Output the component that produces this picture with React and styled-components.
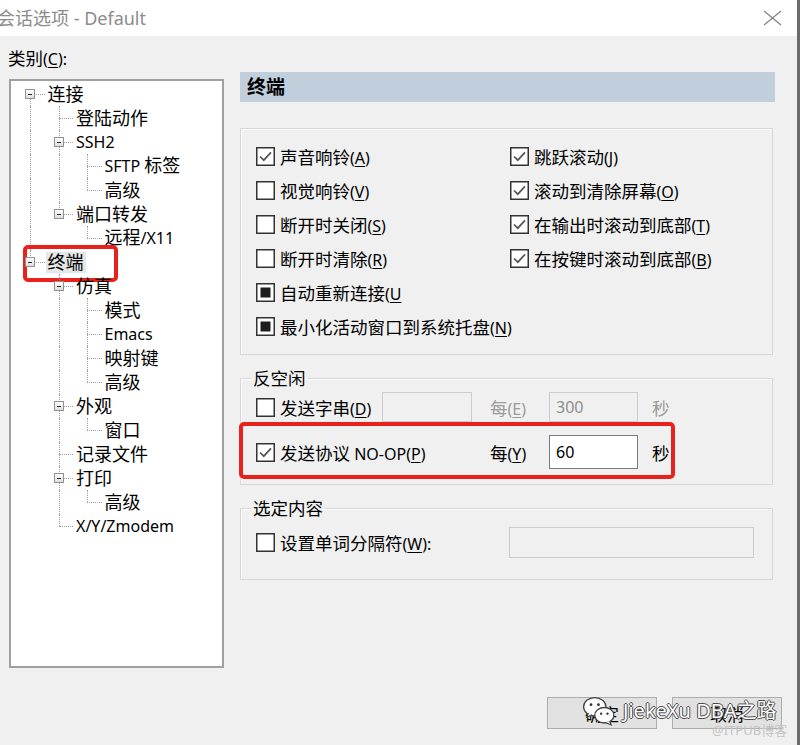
import React from "react";
import styled, { createGlobalStyle } from "styled-components";

const GlobalStyle = createGlobalStyle`
  html, body {
    margin: 0;
    padding: 0;
    background: #6b6b6b;
  }
  body {
    font-family: "Noto Sans", "Noto Sans CJK SC", sans-serif;
    color: #000;
  }
`;

const Window = styled.div`
  width: 800px;
  height: 745px;
  box-sizing: border-box;
  border-right: 3px solid #6b6b6b;
  background: #f0f0f0;
  display: flex;
  flex-direction: column;
  overflow: hidden;
`;

const TitleBar = styled.div`
  height: 36px;
  flex: none;
  background: #fff;
  display: flex;
  align-items: center;
  justify-content: space-between;
  padding-right: 15px;
`;

const TitleText = styled.span`
  margin-left: -3px;
  padding-bottom: 2px;
  font-size: 18px;
  color: #8c8c8c;
`;

const Body = styled.div`
  flex: 1;
  display: flex;
  flex-direction: column;
  padding: 8px 0 0 8px;
`;

const MainRow = styled.div`
  display: flex;
  align-items: flex-start;
`;

const LeftCol = styled.div`
  width: 216px;
  display: flex;
  flex-direction: column;
`;

const CategoryLabel = styled.div`
  font-size: 17.5px;
  line-height: 28px;
`;

const TreeBox = styled.div`
  margin: 6px 0 0 1px;
  width: 215px;
  height: 589px;
  box-sizing: border-box;
  border: 2px solid #a0a0a0;
  background: #fff;
  padding: 1px 0 0 5px;
`;

const TreeRow = styled.div`
  position: relative;
  height: 24px;
  display: flex;
  align-items: stretch;
`;

const Guide = styled.span`
  position: relative;
  flex: none;
  width: 28.5px;
  height: 100%;
  &::before {
    content: "";
    display: ${(p) => (p.$up || p.$down ? "block" : "none")};
    position: absolute;
    left: 14px;
    top: ${(p) => (p.$up ? "0" : "50%")};
    bottom: ${(p) => (p.$down ? "0" : "50%")};
    border-left: 1px dotted #a0a0a0;
  }
  &::after {
    content: "";
    display: ${(p) => (p.$branch ? "block" : "none")};
    position: absolute;
    left: 14px;
    right: 0;
    top: 50%;
    border-top: 1px dotted #a0a0a0;
  }
`;

const Expander = styled.span`
  position: absolute;
  z-index: 1;
  left: 9px;
  top: 7px;
  width: 10px;
  height: 10px;
  box-sizing: border-box;
  border: 1px solid #919191;
  background: linear-gradient(#ffffff, #dedede);
  &::after {
    content: "";
    position: absolute;
    left: 2px;
    right: 2px;
    top: 3.5px;
    height: 1px;
    background: #222;
  }
`;

const TreeLabel = styled.span`
  align-self: center;
  margin-left: 1px;
  padding: 0 2px;
  font-size: 18px;
  line-height: 21px;
  white-space: nowrap;
  background: ${(p) => (p.$selected ? "#e6e6e6" : "transparent")};
`;

const Latin = styled.span`
  font-family: "Noto Sans", sans-serif;
  font-size: 16px;
  u {
    text-underline-offset: 2px;
  }
`;

const Mark = styled.div`
  position: absolute;
  left: ${(p) => p.$left}px;
  top: ${(p) => p.$top}px;
  width: ${(p) => p.$w}px;
  height: ${(p) => p.$h}px;
  box-sizing: border-box;
  border: 4px solid #e8221b;
  border-radius: 5px;
  pointer-events: none;
`;

const RightCol = styled.div`
  margin-left: 16px;
  width: 535px;
  padding-top: 28px;
  display: flex;
  flex-direction: column;
`;

const Header = styled.div`
  height: 30px;
  background: #c1cfdc;
  padding-left: 7px;
  font-size: 19px;
  font-weight: 700;
  line-height: 30px;
`;

const Group = styled.fieldset`
  width: 533px;
  box-sizing: border-box;
  min-width: 0;
  margin: ${(p) => p.$top}px 0 0 0;
  padding: ${(p) => p.$pad};
  border: 1px solid #d7d7d7;
  box-shadow: inset 1px 1px 0 #fbfbfb;
`;

const Legend = styled.legend`
  margin-left: -5px;
  padding: 0 2px;
  font-size: 17.5px;
  line-height: 20px;
`;

const OptionGrid = styled.div`
  display: grid;
  grid-template-columns: 254px 1fr;
  grid-auto-rows: 34px;
  margin-top: -2px;
`;

const CheckItem = styled.label`
  display: flex;
  align-items: center;
  gap: 5px;
  font-size: 17.5px;
  white-space: nowrap;
  grid-column: ${(p) => (p.$wide ? "1 / -1" : "auto")};
  width: ${(p) => (p.$width ? `${p.$width}px` : "auto")};
  flex: none;
  color: ${(p) => (p.$muted ? "#9b9b9b" : "#000")};
`;

const IdleRow = styled.div`
  position: relative;
  display: flex;
  align-items: center;
  height: ${(p) => p.$h}px;
  margin-top: ${(p) => p.$gap || 0}px;
`;

const TextField = styled.div`
  flex: none;
  box-sizing: border-box;
  width: ${(p) => p.$w}px;
  height: ${(p) => p.$h}px;
  margin-left: ${(p) => (p.$auto ? "auto" : "0")};
  margin-right: ${(p) => p.$mr || 0}px;
  padding-left: 6px;
  display: flex;
  align-items: center;
  font-size: 16px;
  background: ${(p) => (p.$disabled ? "#f0f0f0" : "#fff")};
  border: 1px solid ${(p) => (p.$disabled ? "#cccccc" : "#7a7a7a")};
  color: ${(p) => (p.$disabled ? "#8f8f8f" : "#000")};
`;

const Every = styled.span`
  width: 59px;
  flex: none;
  font-size: 17.5px;
  color: ${(p) => (p.$muted ? "#9b9b9b" : "#000")};
`;

const Unit = styled.span`
  font-size: 17.5px;
  color: ${(p) => (p.$muted ? "#9b9b9b" : "#000")};
`;

const ButtonRow = styled.div`
  position: relative;
  margin-top: 29px;
  display: flex;
  justify-content: flex-end;
  gap: 15px;
  padding-right: 15px;
`;

const Button = styled.button`
  width: 110px;
  height: 32px;
  box-sizing: border-box;
  background: #e1e1e1;
  border: 1px solid #adadad;
  font-family: "Noto Sans", "Noto Sans CJK SC", sans-serif;
  font-size: 17px;
  color: #000;
  padding: 0;
`;

const Watermark = styled.div`
  position: absolute;
  left: 574px;
  top: -2px;
  display: flex;
  align-items: center;
  gap: 7px;
  pointer-events: none;
`;

const WatermarkText = styled.span`
  font-size: 20px;
  line-height: 32px;
  color: #fff;
  white-space: nowrap;
  text-shadow: 1px 0 0 #4a4a4a, -1px 0 0 #4a4a4a, 0 1px 0 #4a4a4a,
    0 -1px 0 #4a4a4a;
`;

const Credit = styled.span`
  position: absolute;
  left: 704px;
  top: 25px;
  font-size: 13px;
  line-height: 16px;
  color: #c4c4c4;
  white-space: nowrap;
  pointer-events: none;
`;

// split text into CJK and latin runs, "&X" marks the mnemonic letter
function Caption({ text }) {
  const runs = text.split(/([\u3000-\u9fff\uff00-\uffef]+)/).filter(Boolean);
  return runs.map((run, i) => {
    if (/[\u3000-\u9fff]/.test(run)) return <span key={i}>{run}</span>;
    const at = run.indexOf("&");
    if (at < 0) return <Latin key={i}>{run}</Latin>;
    return (
      <Latin key={i}>
        {run.slice(0, at)}
        <u>{run[at + 1]}</u>
        {run.slice(at + 2)}
      </Latin>
    );
  });
}

function CheckBox({ state }) {
  return (
    <svg width="19" height="19" viewBox="0 0 19 19" style={{ flex: "none" }}>
      <rect x="0.75" y="0.75" width="17.5" height="17.5" fill="#fff" stroke="#333" strokeWidth="1.5" />
      {state === "on" && (
        <polyline points="4,9.5 7.8,13.2 15,5.4" fill="none" stroke="#555" strokeWidth="1.7" />
      )}
      {state === "mixed" && <rect x="4.5" y="4.5" width="10" height="10" fill="#1e1e1e" />}
    </svg>
  );
}

function CloseIcon() {
  return (
    <svg width="19" height="16" viewBox="0 0 19 16">
      <path d="M1 1 L18 15 M18 1 L1 15" stroke="#7d7d7d" strokeWidth="1.1" />
    </svg>
  );
}

function WeChatIcon() {
  return (
    <svg width="34" height="30" viewBox="0 0 32 28">
      <ellipse cx="12" cy="10" rx="10.5" ry="8.5" fill="#fff" stroke="#444" strokeWidth="1.2" />
      <path d="M6 16 L4.5 20 L9.5 17.5" fill="#fff" stroke="#444" strokeWidth="1.1" />
      <circle cx="8.5" cy="8" r="1.3" fill="#333" />
      <circle cx="15.5" cy="8" r="1.3" fill="#333" />
      <ellipse cx="21" cy="18" rx="9" ry="7.3" fill="#fff" stroke="#444" strokeWidth="1.2" />
      <path d="M26 23.5 L27.5 27 L22.5 25" fill="#fff" stroke="#444" strokeWidth="1.1" />
      <circle cx="18" cy="16.5" r="1.1" fill="#333" />
      <circle cx="24" cy="16.5" r="1.1" fill="#333" />
    </svg>
  );
}

const treeItems = [
  { label: "连接", depth: 0, open: true },
  { label: "登陆动作", depth: 1 },
  { label: "SSH2", depth: 1, open: true },
  { label: "SFTP 标签", depth: 2 },
  { label: "高级", depth: 2 },
  { label: "端口转发", depth: 1, open: true },
  { label: "远程/X11", depth: 2 },
  { label: "终端", depth: 0, open: true, selected: true },
  { label: "仿真", depth: 1, open: true },
  { label: "模式", depth: 2 },
  { label: "Emacs", depth: 2 },
  { label: "映射键", depth: 2 },
  { label: "高级", depth: 2 },
  { label: "外观", depth: 1, open: true },
  { label: "窗口", depth: 2 },
  { label: "记录文件", depth: 1 },
  { label: "打印", depth: 1, open: true },
  { label: "高级", depth: 2 },
  { label: "X/Y/Zmodem", depth: 1 },
];

// does a later row sit at this depth before the tree climbs above it
function continues(index, depth) {
  for (let j = index + 1; j < treeItems.length; j++) {
    if (treeItems[j].depth < depth) return false;
    if (treeItems[j].depth === depth) return true;
  }
  return false;
}

function TreeRowView({ item, index }) {
  const guides = [];
  for (let d = 0; d < item.depth; d++) {
    guides.push(<Guide key={d} $up={continues(index, d)} $down={continues(index, d)} />);
  }
  guides.push(
    <Guide key="own" $up={index > 0} $down={continues(index, item.depth)} $branch>
      {item.open && <Expander />}
    </Guide>
  );
  return (
    <TreeRow>
      {guides}
      <TreeLabel $selected={item.selected}>
        <Caption text={item.label} />
      </TreeLabel>
      {item.selected && <Mark $left={7} $top={-5} $w={95} $h={37} />}
    </TreeRow>
  );
}

const options = [
  { text: "声音响铃(&A)", state: "on" },
  { text: "跳跃滚动(&J)", state: "on" },
  { text: "视觉响铃(&V)", state: "off" },
  { text: "滚动到清除屏幕(&O)", state: "on" },
  { text: "断开时关闭(&S)", state: "off" },
  { text: "在输出时滚动到底部(&T)", state: "on" },
  { text: "断开时清除(&R)", state: "off" },
  { text: "在按键时滚动到底部(&B)", state: "on" },
  { text: "自动重新连接(&U", state: "mixed", wide: true },
  { text: "最小化活动窗口到系统托盘(&N)", state: "mixed", wide: true },
];

export default function App() {
  return (
    <>
      <GlobalStyle />
      <Window>
        <TitleBar>
          <TitleText>会话选项 - Default</TitleText>
          <CloseIcon />
        </TitleBar>
        <Body>
          <MainRow>
            <LeftCol>
              <CategoryLabel>
                <Caption text="类别(&C):" />
              </CategoryLabel>
              <TreeBox>
                {treeItems.map((item, i) => (
                  <TreeRowView key={i} item={item} index={i} />
                ))}
              </TreeBox>
            </LeftCol>
            <RightCol>
              <Header>终端</Header>
              <Group $top={26} $pad="12px 0 11px 15px">
                <OptionGrid>
                  {options.map((o) => (
                    <CheckItem key={o.text} $wide={o.wide}>
                      <CheckBox state={o.state} />
                      <span>
                        <Caption text={o.text} />
                      </span>
                    </CheckItem>
                  ))}
                </OptionGrid>
              </Group>
              <Group $top={13} $pad="4px 0 15px 15px">
                <Legend>反空闲</Legend>
                <IdleRow $h={30}>
                  <CheckItem $width={126}>
                    <CheckBox state="off" />
                    <span>
                      <Caption text="发送字串(&D)" />
                    </span>
                  </CheckItem>
                  <TextField $w={90} $h={30} $mr={18} $disabled />
                  <Every $muted>
                    <Caption text="每(&E)" />
                  </Every>
                  <TextField $w={89} $h={30} $mr={14} $disabled>
                    300
                  </TextField>
                  <Unit $muted>秒</Unit>
                </IdleRow>
                <IdleRow $h={34} $gap={13}>
                  <CheckItem $width={234}>
                    <CheckBox state="on" />
                    <span>
                      <Caption text="发送协议 NO-OP(&P)" />
                    </span>
                  </CheckItem>
                  <Every>
                    <Caption text="每(&Y)" />
                  </Every>
                  <TextField $w={89} $h={34} $mr={14}>
                    60
                  </TextField>
                  <Unit>秒</Unit>
                  <Mark $left={-17} $top={-13} $w={436} $h={57} />
                </IdleRow>
              </Group>
              <Group $top={13} $pad="9px 18px 21px 15px">
                <Legend>选定内容</Legend>
                <IdleRow $h={31}>
                  <CheckItem>
                    <CheckBox state="off" />
                    <span>
                      <Caption text="设置单词分隔符(&W):" />
                    </span>
                  </CheckItem>
                  <TextField $w={245} $h={31} $auto $disabled />
                </IdleRow>
              </Group>
            </RightCol>
          </MainRow>
          <ButtonRow>
            <Button>确定</Button>
            <Button>取消</Button>
            <Watermark>
              <WeChatIcon />
              <WatermarkText>JiekeXu DBA之路</WatermarkText>
            </Watermark>
            <Credit>@ITPUB博客</Credit>
          </ButtonRow>
        </Body>
      </Window>
    </>
  );
}
